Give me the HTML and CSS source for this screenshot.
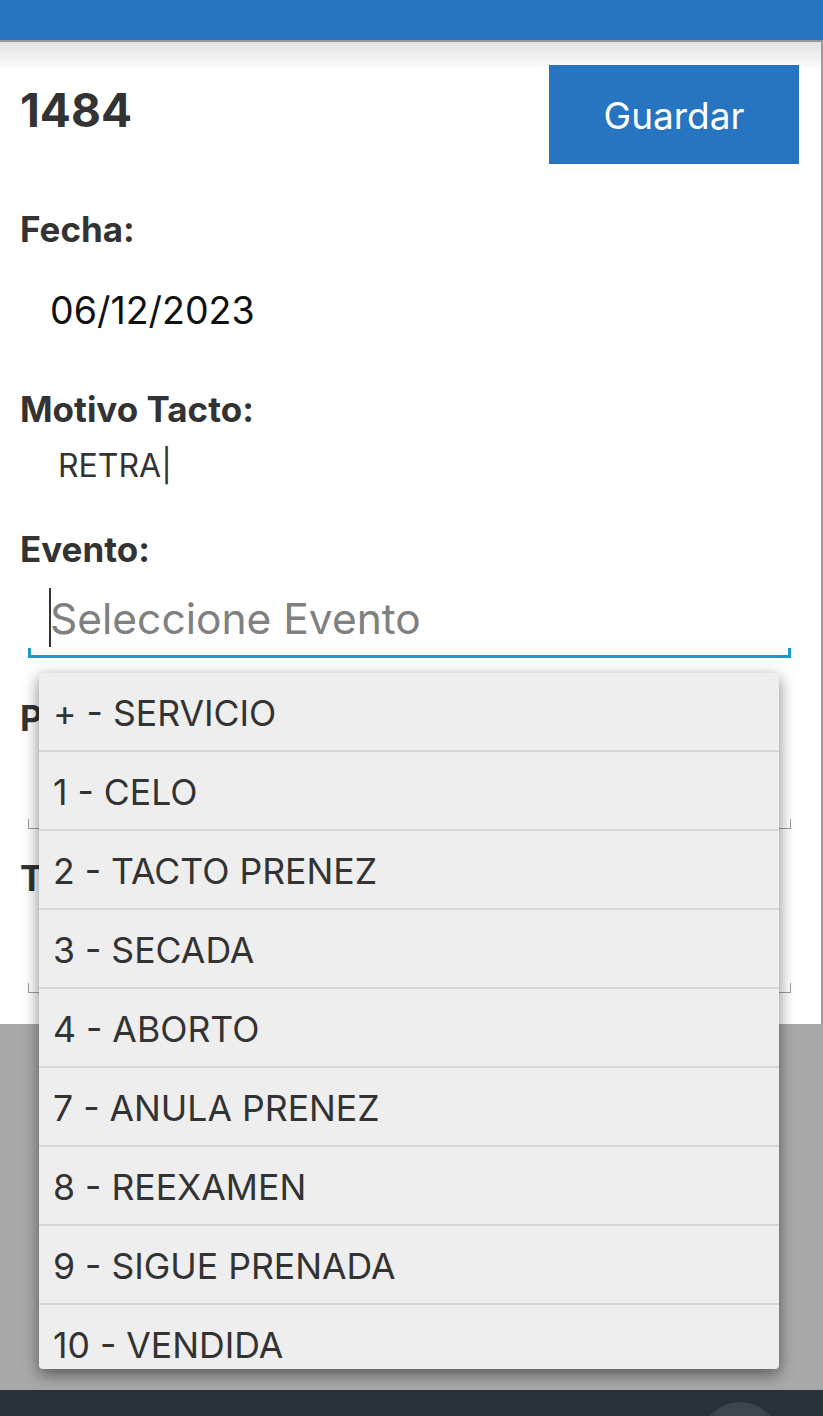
FILE: index.html
```html
<!DOCTYPE html>
<html lang="es">
<head>
<meta charset="utf-8">
<title>1484</title>
<link rel="stylesheet" href="styles.css">
</head>
<body>
<div class="topbar"></div>
<main class="panel">
  <div class="head">
    <h1 class="num">1484</h1>
    <button class="save">Guardar</button>
  </div>
  <div class="lbl l-fecha">Fecha:</div>
  <div class="date">06/12/2023</div>
  <div class="lbl l-motivo">Motivo Tacto:</div>
  <div class="motivo">RETRA|</div>
  <div class="lbl l-evento">Evento:</div>
  <div class="input focused"><span class="cursor"></span><span class="ph">Seleccione Evento</span></div>
  <div class="lbl l-p">Palpador:</div>
  <div class="input plain i2"></div>
  <div class="lbl l-t">Toro:</div>
  <div class="input plain i3"></div>
</main>
<div class="backdrop"></div>
<footer class="navbar"><span class="circle"></span></footer>
<ul class="dropdown">
  <li>+ - SERVICIO</li>
  <li>1 - CELO</li>
  <li>2 - TACTO PRENEZ</li>
  <li>3 - SECADA</li>
  <li>4 - ABORTO</li>
  <li>7 - ANULA PRENEZ</li>
  <li>8 - REEXAMEN</li>
  <li>9 - SIGUE PRENADA</li>
  <li>10 - VENDIDA</li>
</ul>
</body>
</html>
```
FILE: styles.css
```css
* { box-sizing: border-box; margin: 0; padding: 0; }
body {
  width: 823px;
  height: 1416px;
  background: #a9a9a9;
  font-family: "Inter", "Noto Sans", sans-serif;
  position: relative;
  overflow: hidden;
  display: flex;
  flex-direction: column;
}
.topbar { flex: none; height: 40px; background: #2775c0; }
.panel {
  flex: none;
  height: 984px;
  background: linear-gradient(#e3e3e3, #ffffff) top / 100% 30px no-repeat, #fff;
  border-top: 2px solid #999;
  border-right: 2px solid #9c9c9c;
  padding: 23px 22px 0 20px;
}
.head { display: flex; justify-content: space-between; align-items: flex-start; height: 99px; }
.num { font-size: 46px; line-height: 1; font-weight: 700; color: #333; margin-top: 22px; }
.save {
  width: 250px; height: 99px; border: none; background: #2775c0; color: #fff;
  font-family: inherit; font-size: 37px; font-weight: 400; padding-top: 2px;
}
.lbl { font-size: 35px; line-height: 1; font-weight: 700; color: #333; }
.l-fecha { margin-top: 48px; }
.date { margin-top: 45px; font-size: 37.5px; line-height: 1; color: #111; padding-left: 30px; }
.l-motivo { margin-top: 62px; }
.motivo { margin-top: 23px; font-size: 32px; line-height: 1; color: #333; padding-left: 38px; }
.l-evento { margin-top: 50px; }
.input { height: 73px; margin: 18px 8px 0; display: flex; align-items: flex-start; padding-left: 21px; }
.focused {
  border-bottom: 3px solid #1a9bcb;
  background: linear-gradient(#1a9bcb, #1a9bcb) left bottom / 3px 7px no-repeat,
              linear-gradient(#1a9bcb, #1a9bcb) right bottom / 3px 7px no-repeat;
}
.plain {
  border-bottom: 1px solid #a0a0a0;
  background: linear-gradient(#a0a0a0, #a0a0a0) left bottom / 1px 9px no-repeat,
              linear-gradient(#a0a0a0, #a0a0a0) right bottom / 1px 9px no-repeat;
}
.cursor { width: 2px; height: 59px; margin-top: 3px; background: #333; flex: none; }
.ph { margin-top: 13px; margin-left: -1px; font-size: 42.5px; line-height: 1; color: #808080; }
.l-p { margin-top: 43px; }
.i2 { margin-top: 20px; }
.l-t { margin-top: 32px; }
.i3 { margin-top: 24px; }
.backdrop { flex: 1; }
.navbar { flex: none; height: 26px; background: #263238; overflow: hidden; }
.circle { display: block; width: 80px; height: 80px; border-radius: 50%; background: #3b464e; margin: 12px 0 0 700px; }
.dropdown {
  position: absolute; left: 39px; top: 673px; width: 740px; height: 696px;
  overflow: hidden; list-style: none; background: #eeeeee;
  border-radius: 0 0 4px 4px;
  box-shadow: 0 5px 16px rgba(0,0,0,0.5);
}
.dropdown li {
  height: 79px; border-bottom: 2px solid #d6d6d6; display: flex; align-items: center;
  padding: 4px 0 0 14px; font-size: 35.6px; color: #333;
}
```
